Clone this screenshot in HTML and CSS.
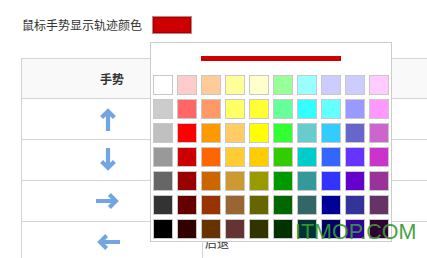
FILE: index.html
```html
<!DOCTYPE html>
<html lang="zh-CN">
<head>
    <meta charset="UTF-8">
    <title>鼠标手势设置</title>
    <link rel="stylesheet" href="styles.css">
</head>
<body>

<div class="setting">
    <span class="setting-label">鼠标手势显示轨迹颜色</span>
    <span class="color-btn"></span>
</div>

<div class="gesture-table">
    <div class="cell head">手势</div>
    <div class="cell head">功能</div>

    <div class="cell icon">
        <svg class="arrow" viewBox="0 0 16 24"><path d="M8 5.5V24M1.6 10.6L8 4.2l6.4 6.4"/></svg>
    </div>
    <div class="cell action">向上</div>

    <div class="cell icon">
        <svg class="arrow down" viewBox="0 0 16 24"><path d="M8 5.5V24M1.6 10.6L8 4.2l6.4 6.4"/></svg>
    </div>
    <div class="cell action">向下</div>

    <div class="cell icon">
        <svg class="arrow right" viewBox="0 0 16 24"><path d="M8 5.5V24M1.6 10.6L8 4.2l6.4 6.4"/></svg>
    </div>
    <div class="cell action">前进</div>

    <div class="cell icon">
        <svg class="arrow left" viewBox="0 0 16 24"><path d="M8 5.5V24M1.6 10.6L8 4.2l6.4 6.4"/></svg>
    </div>
    <div class="cell action">后退</div>
</div>

<!-- color dropdown -->
<div class="picker">
    <div class="picker-current"></div>
    <div class="swatches">
        <span class="swatch" style="background:#ffffff"></span>
        <span class="swatch" style="background:#ffcccc"></span>
        <span class="swatch" style="background:#ffcc99"></span>
        <span class="swatch" style="background:#ffff99"></span>
        <span class="swatch" style="background:#ffffcc"></span>
        <span class="swatch" style="background:#99ff99"></span>
        <span class="swatch" style="background:#99ffff"></span>
        <span class="swatch" style="background:#ccccff"></span>
        <span class="swatch" style="background:#ccccff"></span>
        <span class="swatch" style="background:#ffccff"></span>

        <span class="swatch" style="background:#cccccc"></span>
        <span class="swatch" style="background:#ff6666"></span>
        <span class="swatch" style="background:#ff9966"></span>
        <span class="swatch" style="background:#ffff66"></span>
        <span class="swatch" style="background:#ffff33"></span>
        <span class="swatch" style="background:#66ff99"></span>
        <span class="swatch" style="background:#33ffff"></span>
        <span class="swatch" style="background:#66ffff"></span>
        <span class="swatch" style="background:#9999ff"></span>
        <span class="swatch" style="background:#ff99ff"></span>

        <span class="swatch" style="background:#c0c0c0"></span>
        <span class="swatch" style="background:#ff0000"></span>
        <span class="swatch" style="background:#ff9900"></span>
        <span class="swatch" style="background:#ffcc66"></span>
        <span class="swatch" style="background:#ffff00"></span>
        <span class="swatch" style="background:#33ff33"></span>
        <span class="swatch" style="background:#66cccc"></span>
        <span class="swatch" style="background:#33ccff"></span>
        <span class="swatch" style="background:#6666cc"></span>
        <span class="swatch" style="background:#cc66cc"></span>

        <span class="swatch" style="background:#999999"></span>
        <span class="swatch" style="background:#cc0000"></span>
        <span class="swatch" style="background:#ff6600"></span>
        <span class="swatch" style="background:#ffcc33"></span>
        <span class="swatch" style="background:#ffcc00"></span>
        <span class="swatch" style="background:#33cc00"></span>
        <span class="swatch" style="background:#00cccc"></span>
        <span class="swatch" style="background:#3366ff"></span>
        <span class="swatch" style="background:#6633ff"></span>
        <span class="swatch" style="background:#cc33cc"></span>

        <span class="swatch" style="background:#666666"></span>
        <span class="swatch" style="background:#990000"></span>
        <span class="swatch" style="background:#cc6600"></span>
        <span class="swatch" style="background:#cc9933"></span>
        <span class="swatch" style="background:#999900"></span>
        <span class="swatch" style="background:#009900"></span>
        <span class="swatch" style="background:#339999"></span>
        <span class="swatch" style="background:#3333ff"></span>
        <span class="swatch" style="background:#6600cc"></span>
        <span class="swatch" style="background:#993399"></span>

        <span class="swatch" style="background:#333333"></span>
        <span class="swatch" style="background:#660000"></span>
        <span class="swatch" style="background:#993300"></span>
        <span class="swatch" style="background:#996633"></span>
        <span class="swatch" style="background:#666600"></span>
        <span class="swatch" style="background:#006600"></span>
        <span class="swatch" style="background:#336666"></span>
        <span class="swatch" style="background:#000099"></span>
        <span class="swatch" style="background:#333399"></span>
        <span class="swatch" style="background:#663366"></span>

        <span class="swatch" style="background:#000000"></span>
        <span class="swatch" style="background:#330000"></span>
        <span class="swatch" style="background:#663300"></span>
        <span class="swatch" style="background:#663333"></span>
        <span class="swatch" style="background:#333300"></span>
        <span class="swatch" style="background:#003300"></span>
        <span class="swatch" style="background:#003333"></span>
        <span class="swatch" style="background:#000066"></span>
        <span class="swatch" style="background:#330099"></span>
        <span class="swatch" style="background:#330033"></span>
    </div>
</div>

<div class="watermark">ITMOP.COM</div>

</body>
</html>
```

FILE: styles.css
```css
html, body {
    margin: 0;
    overflow: hidden;
}

body {
    position: relative;
    width: 427px;
    height: 258px;
    background: #fff;
    font-family: "Noto Sans CJK SC", "Microsoft YaHei", sans-serif;
    font-size: 12px;
    color: #333;
}

/* top setting row */
.setting {
    display: flex;
    align-items: center;
    gap: 10px;
    padding: 16px 0 0 22px;
    height: 18px;
}

.setting-label {
    line-height: 18px;
}

.color-btn {
    box-sizing: border-box;
    width: 40px;
    height: 18px;
    background: #cc0000;
    border: 1px solid #c98383;
    box-shadow: inset 0 0 0 1px #a30000;
}

/* gesture table, runs to the right edge of the window */
.gesture-table {
    display: grid;
    grid-template-columns: 181px 1fr;
    grid-template-rows: 40px repeat(4, 41px);
    margin: 24px 0 0 21px;
    border-top: 1px solid #d4d4d4;
    border-left: 1px solid #d4d4d4;
}

.cell {
    box-sizing: border-box;
    border-right: 1px solid #d4d4d4;
    border-bottom: 1px solid #d4d4d4;
    display: flex;
    align-items: center;
}

.cell:nth-child(2n) {
    border-right: none;
}

.cell.head {
    background: #f9f9f9;
    justify-content: center;
    font-weight: bold;
}

.cell.icon {
    justify-content: center;
    padding-right: 8px;
}

.cell.action {
    padding-left: 2px;
}

.arrow {
    width: 16px;
    height: 24px;
    fill: none;
    stroke: #72a5e2;
    stroke-width: 4.2;
}

.arrow.down  { transform: rotate(180deg); }
.arrow.right { transform: rotate(90deg); }
.arrow.left  { transform: rotate(-90deg); }

/* color dropdown */
.picker {
    position: absolute;
    left: 150px;
    top: 42px;
    box-sizing: border-box;
    width: 242px;
    padding: 13px 2px 2px;
    background: #fff;
    border: 1px solid #cccccc;
}

.picker-current {
    width: 140px;
    height: 5px;
    margin: 0 auto;
    background: #cc0000;
}

.swatches {
    display: grid;
    grid-template-columns: repeat(10, 20px);
    grid-auto-rows: 20px;
    gap: 4px;
    margin-top: 14px;
}

.swatch {
    box-sizing: border-box;
    border: 1px solid #c8c8c8;
}

.watermark {
    position: absolute;
    left: 295px;
    top: 222px;
    font-family: "Liberation Sans", Arial, sans-serif;
    font-size: 21.5px;
    line-height: 1;
    color: #3b9a33;
    opacity: 0.92;
}
```
